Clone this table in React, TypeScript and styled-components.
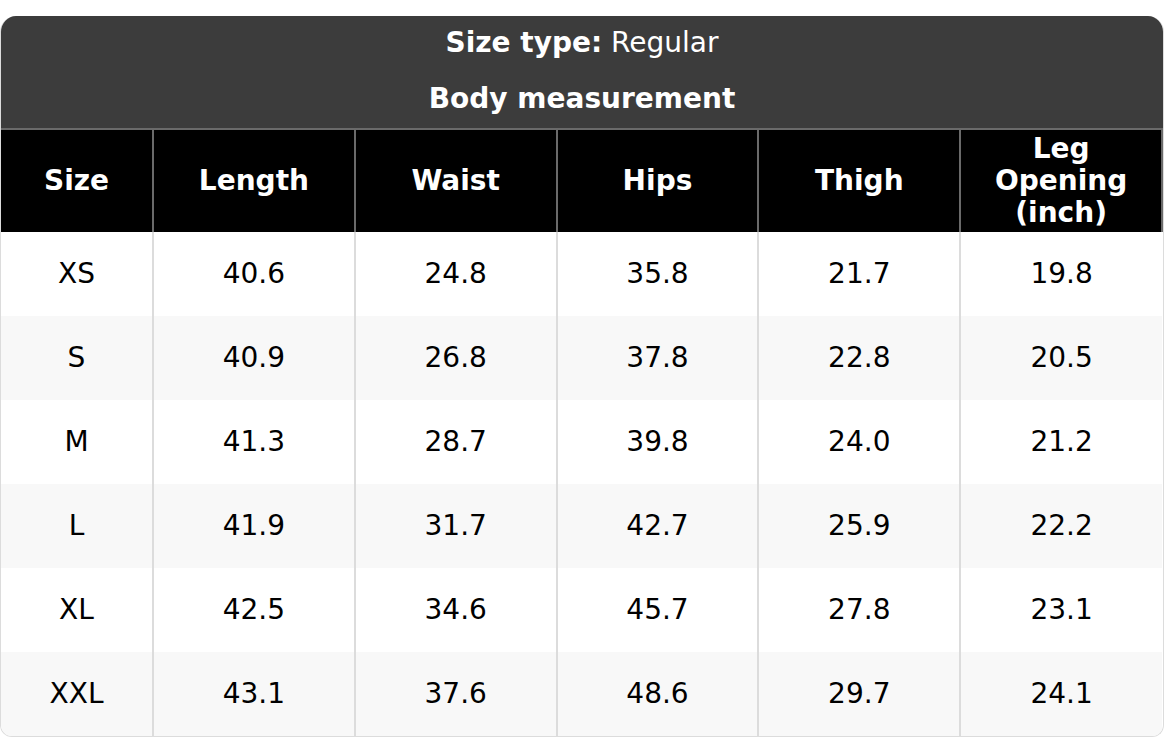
import React from 'react';
import styled, { createGlobalStyle } from 'styled-components';

const GlobalStyle = createGlobalStyle`
    * {
        box-sizing: border-box;
    }

    body {
        margin: 0;
        background: #fff;
        font-family: 'DejaVu Sans', 'Liberation Sans', sans-serif;
    }
`;

const columns = ['Size', 'Length', 'Waist', 'Hips', 'Thigh', 'Leg Opening (inch)'];

const rows = [
    ['XS', '40.6', '24.8', '35.8', '21.7', '19.8'],
    ['S', '40.9', '26.8', '37.8', '22.8', '20.5'],
    ['M', '41.3', '28.7', '39.8', '24.0', '21.2'],
    ['L', '41.9', '31.7', '42.7', '25.9', '22.2'],
    ['XL', '42.5', '34.6', '45.7', '27.8', '23.1'],
    ['XXL', '43.1', '37.6', '48.6', '29.7', '24.1'],
];

const App: React.FC = () => {
    return (
        <>
            <GlobalStyle />
            <Page>
                <Card>
                    <TitleBox>
                        <p>
                            <b>Size type:</b> Regular
                        </p>
                        <h3>Body measurement</h3>
                    </TitleBox>
                    <Table>
                        <colgroup>
                            <col style={{ width: '152px' }} />
                            {columns.slice(1).map((c) => (
                                <col key={c} />
                            ))}
                        </colgroup>
                        <thead>
                            <tr>
                                {columns.map((c) => (
                                    <HeadCell key={c}>{c}</HeadCell>
                                ))}
                            </tr>
                        </thead>
                        <tbody>
                            {rows.map((r, i) => (
                                <Row key={r[0]} $striped={i % 2 === 1}>
                                    {r.map((v, j) => (
                                        <Cell key={j}>{v}</Cell>
                                    ))}
                                </Row>
                            ))}
                        </tbody>
                    </Table>
                </Card>
            </Page>
        </>
    );
};

export default App;

const Page = styled.div`
    padding-top: 16px;
    width: 1164px;
`;

const Card = styled.div`
    width: 100%;
    border: 1px solid #dcdcdc;
    border-top: none;
    border-radius: 16px 16px 12px 12px;
    overflow: hidden;
`;

const TitleBox = styled.div`
    background-color: #3c3c3c;
    color: #fff;
    display: flex;
    flex-direction: column;
    align-items: center;
    gap: 24px;
    padding: 11px 0 13px;
    border-bottom: 2px solid #6a6a6a;

    & > p,
    & > h3 {
        margin: 0;
        font-size: 28px;
        line-height: 32px;
        font-weight: normal;
    }

    & > h3 {
        font-weight: bold;
    }
`;

const Table = styled.table`
    width: 100%;
    border-collapse: collapse;
    table-layout: fixed;
`;

const HeadCell = styled.th`
    background-color: #000;
    color: #fff;
    font-size: 28px;
    line-height: 32px;
    font-weight: bold;
    text-align: center;
    padding: 3px 12px;
    height: 102px;
    border-left: 2px solid #6a6a6a;
    border-right: 2px solid #6a6a6a;

    &:first-child {
        border-left: none;
    }
`;

const Row = styled.tr<{ $striped: boolean }>`
    background-color: ${(p) => (p.$striped ? '#f8f8f8' : '#fff')};
`;

const Cell = styled.td`
    font-size: 28px;
    line-height: 32px;
    color: #000;
    text-align: center;
    padding: 26px 8px;
    height: 84px;
    border-left: 2px solid #dcdcdc;

    &:first-child {
        border-left: none;
    }
`;
